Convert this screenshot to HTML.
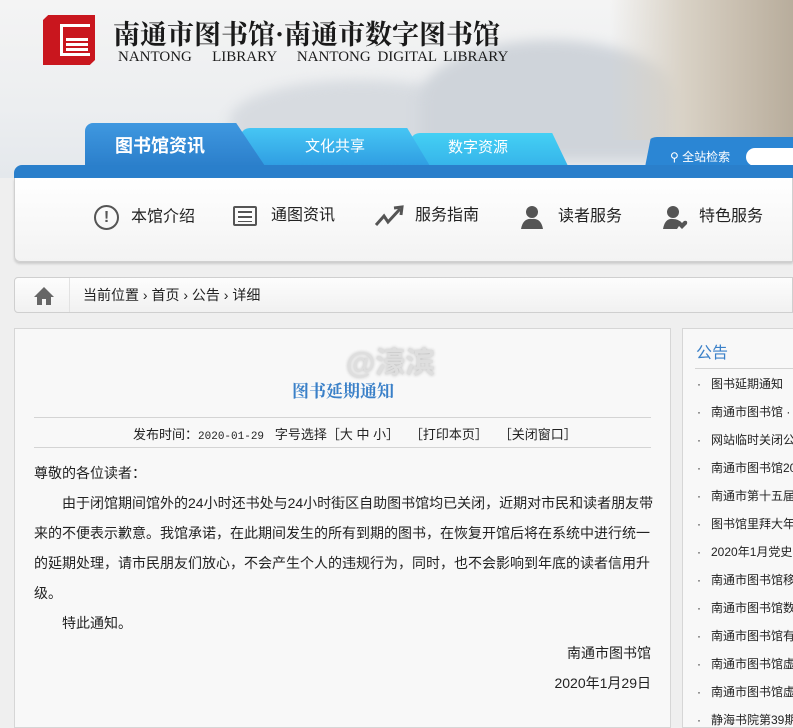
<!DOCTYPE html>
<html><head><meta charset="utf-8"><style>
*{margin:0;padding:0;box-sizing:border-box}
body{width:793px;height:721px;overflow:hidden;background:#efefef;font-family:"Liberation Sans","Noto Sans CJK SC",sans-serif;position:relative;color:#222}
.hdr{position:absolute;left:0;top:0;width:793px;height:178px;background:linear-gradient(180deg,#f4f4f4 0%,#eceef0 60%,#e4e8ec 100%)}
.mtn{position:absolute;border-radius:50% 50% 0 0;background:#d7dbe0;filter:blur(6px)}
.bld{position:absolute;left:610px;top:0;width:183px;height:140px;background:linear-gradient(90deg,rgba(236,236,236,0) 0%,#d9d2c6 40%,#c9bfb0 70%,#b8ad9c 100%)}
.tab{position:absolute;color:#fff;text-align:center;font-size:15px}
.bar{position:absolute;left:14px;top:165px;width:779px;height:14px;background:#2a7fcb;border-radius:8px 0 0 0}
.nav{position:absolute;left:14px;top:178px;width:779px;height:84px;background:linear-gradient(#fff,#f3f3f3);border:1px solid #d0d0d0;border-top:none;border-radius:0 0 0 6px;box-shadow:0 2px 2px #ccc}
.ni{position:absolute;top:205px;font-size:16px;color:#222;height:22px;line-height:22px}
.bc{position:absolute;left:14px;top:277px;width:779px;height:36px;background:linear-gradient(#fdfdfd,#f1f1f1);border:1px solid #cfcfcf;border-radius:4px 0 0 4px;font-size:14px;line-height:34px}
.main{position:absolute;left:14px;top:328px;width:657px;height:400px;background:#f8f8f8;border:1px solid #d6d6d6}
.side{position:absolute;left:682px;top:328px;width:120px;height:400px;background:#f8f8f8;border:1px solid #d6d6d6}
.p{position:absolute;left:34px;font-size:14px;line-height:30px;color:#222;white-space:nowrap}
.si{position:absolute;left:14px;font-size:12px;white-space:nowrap;color:#222}
</style></head><body>
<div class="hdr">
<div class="mtn" style="left:230px;top:80px;width:260px;height:80px"></div>
<div class="mtn" style="left:420px;top:40px;width:260px;height:120px;background:#cfd4da"></div>
<div class="bld"></div>
</div>
<div style="position:absolute;left:43px;top:15px;width:52px;height:50px;background:#c9161e;clip-path:polygon(10% 0,100% 0,100% 90%,90% 100%,0 100%,0 10%)"></div>
<div style="position:absolute;left:60px;top:24px;width:30px;height:32px;border:3px solid #fff;border-right:none"></div>
<div style="position:absolute;left:66px;top:38px;width:22px;height:3px;background:#fff;box-shadow:0 5px 0 #fff,0 10px 0 #fff,0 15px 0 #fff"></div>
<div style="position:absolute;left:113px;top:13px;font-family:'Noto Serif CJK SC',serif;font-weight:bold;font-size:27px;color:#1a1a1a;letter-spacing:0px;white-space:nowrap">南通市图书馆·南通市数字图书馆</div>
<div style="position:absolute;left:118px;top:49px;font-family:'Liberation Serif',serif;font-size:15px;color:#1a1a1a;white-space:nowrap;word-spacing:3px">NANTONG &nbsp; LIBRARY &nbsp; NANTONG DIGITAL LIBRARY</div>
<div class="tab" style="left:410px;top:133px;width:158px;height:33px;background:linear-gradient(#44d0f4,#36b4ea);clip-path:polygon(0 0,90% 0,100% 100%,0 100%);border-radius:10px 10px 0 0;line-height:29px;padding-right:22px">数字资源</div>
<div class="tab" style="left:240px;top:128px;width:190px;height:38px;background:linear-gradient(#46c6f4,#2f9de2);clip-path:polygon(0 0,88% 0,100% 100%,4% 100%);border-radius:10px 10px 0 0;line-height:38px">文化共享</div>
<div class="tab" style="left:85px;top:123px;width:180px;height:43px;background:linear-gradient(#3f98e0,#2b7fcb);clip-path:polygon(0 0,84% 0,100% 100%,0 100%);border-radius:8px 8px 0 0;line-height:46px;font-size:18px;font-weight:bold;padding-right:30px">图书馆资讯</div>
<div style="position:absolute;left:645px;top:137px;width:148px;height:30px;background:#2b86d4;border-radius:12px 0 0 0;clip-path:polygon(4% 0,100% 0,100% 100%,0 100%)"></div>
<div style="position:absolute;left:670px;top:148px;font-size:12px;color:#fff">⚲ 全站检索</div>
<div style="position:absolute;left:746px;top:148px;width:50px;height:18px;background:#fff;border-radius:9px 0 0 9px"></div>
<div class="bar"></div>
<div class="nav"></div>
<div class="ni" style="left:94px"><span style="display:inline-block;width:25px;height:25px;border:2px solid #555;border-radius:50%;text-align:center;line-height:21px;font-weight:bold;color:#555;vertical-align:middle;margin-right:12px">!</span>本馆介绍</div>
<div class="ni" style="left:233px"><span style="display:inline-block;width:24px;height:20px;border:2px solid #555;border-radius:2px;vertical-align:middle;margin-right:14px;background:repeating-linear-gradient(#fff 0 3px,#555 3px 5px);background-clip:content-box;padding:2px 3px"></span>通图资讯</div>
<div class="ni" style="left:375px"><svg width="30" height="22" style="vertical-align:middle;margin-right:10px"><path d="M1 20 L9 11 L13 17 L25 4 M19 3 L27 2 L26 10" stroke="#555" stroke-width="3" fill="none"/></svg>服务指南</div>
<div class="ni" style="left:520px"><svg width="24" height="24" style="vertical-align:middle;margin-right:14px"><circle cx="12" cy="7" r="6" fill="#555"/><path d="M1 24 Q3 13 12 14 Q21 13 23 24Z" fill="#555"/></svg>读者服务</div>
<div class="ni" style="left:663px"><svg width="26" height="24" style="vertical-align:middle;margin-right:10px"><circle cx="10" cy="7" r="6" fill="#555"/><path d="M0 24 Q2 13 10 14 Q16 14 18 18 L14 24Z" fill="#555"/><path d="M19 24 L14 19 Q13 15 17 16 L19 18 L21 16 Q25 15 24 19Z" fill="#555"/></svg>特色服务</div>
<div class="bc"><span style="position:absolute;left:18px;top:6px;width:20px;height:20px"><svg width="22" height="20"><path d="M11 1 L1 11 H4 V19 H9 V13 H13 V19 H18 V11 H21Z" fill="#666"/></svg></span><span style="position:absolute;left:54px;top:0;width:1px;height:34px;background:#e2e2e2"></span><span style="position:absolute;left:68px">当前位置 › 首页 › 公告 › 详细</span></div>
<div class="main"></div>
<div style="position:absolute;left:346px;top:338px;font-size:30px;color:#dedede;font-weight:bold;text-shadow:0 0 3px #bbb">@濠滨</div>
<div style="position:absolute;left:0;top:377px;width:686px;text-align:center;font-family:'Noto Serif CJK SC',serif;font-weight:bold;font-size:17px;color:#3a80c8">图书延期通知</div>
<div style="position:absolute;left:34px;top:417px;width:617px;height:1px;background:#d4d4d4"></div>
<div style="position:absolute;left:133px;top:424px;font-size:13px;white-space:nowrap">发布时间：<span style="font-family:'Liberation Mono',monospace;font-size:11px">2020-01-29</span> &nbsp; 字号选择［大 中 小］ &nbsp; ［打印本页］ &nbsp; ［关闭窗口］</div>
<div style="position:absolute;left:34px;top:447px;width:617px;height:1px;background:#d4d4d4"></div>
<div class="p" style="top:458px">尊敬的各位读者：</div>
<div class="p" style="top:488px;left:62px">由于闭馆期间馆外的24小时还书处与24小时街区自助图书馆均已关闭，近期对市民和读者朋友带</div>
<div class="p" style="top:518px">来的不便表示歉意。我馆承诺，在此期间发生的所有到期的图书，在恢复开馆后将在系统中进行统一</div>
<div class="p" style="top:548px">的延期处理，请市民朋友们放心，不会产生个人的违规行为，同时，也不会影响到年底的读者信用升</div>
<div class="p" style="top:578px">级。</div>
<div class="p" style="top:608px;left:62px">特此通知。</div>
<div class="p" style="top:638px;left:auto;right:142px">南通市图书馆</div>
<div class="p" style="top:668px;left:auto;right:142px">2020年1月29日</div>
<div class="side">
<div style="position:absolute;left:13px;top:10px;font-size:16px;color:#3a80c8">公告</div>
<div style="position:absolute;left:12px;top:39px;width:120px;height:1px;background:#d4d4d4"></div>
<div class="si" style="top:46px">·&nbsp;&nbsp; 图书延期通知</div>
<div class="si" style="top:74px">·&nbsp;&nbsp; 南通市图书馆 ·</div>
<div class="si" style="top:102px">·&nbsp;&nbsp; 网站临时关闭公</div>
<div class="si" style="top:130px">·&nbsp;&nbsp; 南通市图书馆20</div>
<div class="si" style="top:158px">·&nbsp;&nbsp; 南通市第十五届</div>
<div class="si" style="top:186px">·&nbsp;&nbsp; 图书馆里拜大年</div>
<div class="si" style="top:214px">·&nbsp;&nbsp; 2020年1月党史</div>
<div class="si" style="top:242px">·&nbsp;&nbsp; 南通市图书馆移</div>
<div class="si" style="top:270px">·&nbsp;&nbsp; 南通市图书馆数</div>
<div class="si" style="top:298px">·&nbsp;&nbsp; 南通市图书馆有</div>
<div class="si" style="top:326px">·&nbsp;&nbsp; 南通市图书馆虚</div>
<div class="si" style="top:354px">·&nbsp;&nbsp; 南通市图书馆虚</div>
<div class="si" style="top:382px">·&nbsp;&nbsp; 静海书院第39期</div>
</div>
</body></html>
